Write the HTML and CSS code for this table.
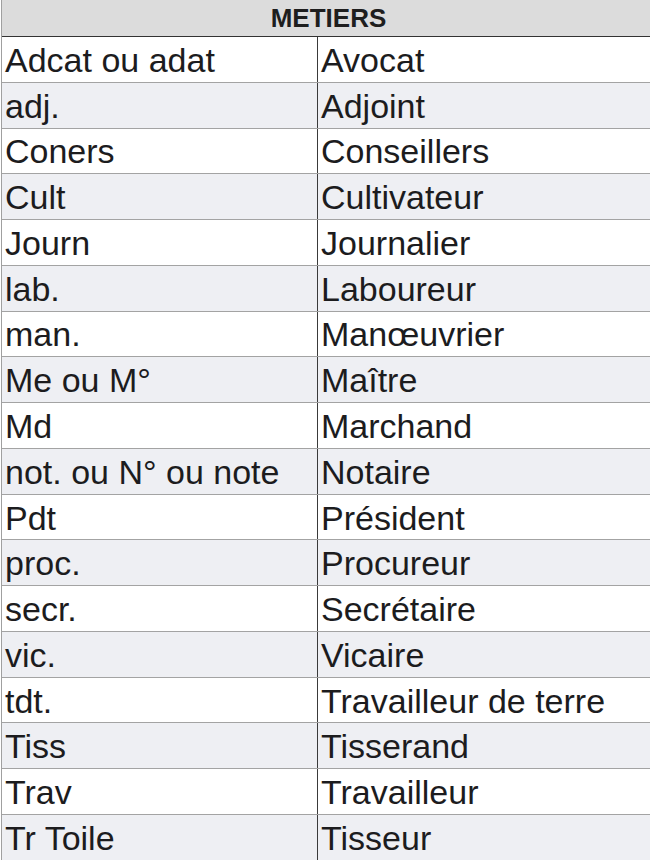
FILE: index.html
```html
<!DOCTYPE html>
<html lang="fr">
<head>
<meta charset="utf-8">
<title>METIERS</title>
<link rel="stylesheet" href="styles.css">
</head>
<body>
<div class="sheet">
  <div class="head">METIERS</div>
  <div class="row"><div class="c1">Adcat ou adat</div><div class="c2">Avocat</div></div>
  <div class="row alt"><div class="c1">adj.</div><div class="c2">Adjoint</div></div>
  <div class="row"><div class="c1">Coners</div><div class="c2">Conseillers</div></div>
  <div class="row alt"><div class="c1">Cult</div><div class="c2">Cultivateur</div></div>
  <div class="row"><div class="c1">Journ</div><div class="c2">Journalier</div></div>
  <div class="row alt"><div class="c1">lab.</div><div class="c2">Laboureur</div></div>
  <div class="row"><div class="c1">man.</div><div class="c2">Manœuvrier</div></div>
  <div class="row alt"><div class="c1">Me ou M°</div><div class="c2">Maître</div></div>
  <div class="row"><div class="c1">Md</div><div class="c2">Marchand</div></div>
  <div class="row alt"><div class="c1">not. ou N° ou note</div><div class="c2">Notaire</div></div>
  <div class="row"><div class="c1">Pdt</div><div class="c2">Président</div></div>
  <div class="row alt"><div class="c1">proc.</div><div class="c2">Procureur</div></div>
  <div class="row"><div class="c1">secr.</div><div class="c2">Secrétaire</div></div>
  <div class="row alt"><div class="c1">vic.</div><div class="c2">Vicaire</div></div>
  <div class="row"><div class="c1">tdt.</div><div class="c2">Travailleur de terre</div></div>
  <div class="row alt"><div class="c1">Tiss</div><div class="c2">Tisserand</div></div>
  <div class="row"><div class="c1">Trav</div><div class="c2">Travailleur</div></div>
  <div class="row alt"><div class="c1">Tr Toile</div><div class="c2">Tisseur</div></div>
</div>
</body>
</html>
```
FILE: styles.css
```css
html, body {
  margin: 0;
  padding: 0;
  background: #ffffff;
}
body {
  font-family: "Liberation Sans", Arial, Helvetica, sans-serif;
  color: #1c1c1e;
  overflow: hidden;
}
.sheet {
  margin-left: 1px;
  border-left: 1px solid #a0a0a0;
  width: 649px;
  height: 860px;
  display: flex;
  flex-direction: column;
}
.head {
  height: 36px;
  flex: 0 0 auto;
  box-sizing: content-box;
  background: #dcdcdc;
  border-bottom: 1px solid #333333;
  display: flex;
  align-items: center;
  justify-content: center;
  font-weight: bold;
  font-size: 26px;
  color: #1e1e1e;
  padding-left: 4px;
}
.row {
  flex: 0 0 auto;
  height: 45.78px;
  box-sizing: border-box;
  border-bottom: 1px solid #a3a3a3;
  display: grid;
  grid-template-columns: 316px 1fr;
  font-size: 34px;
  background: #ffffff;
}
.row.alt {
  background: #eeeff3;
}
.c1, .c2 {
  display: flex;
  align-items: center;
  white-space: nowrap;
  overflow: hidden;
  padding-top: 2px;
}
.c1 {
  padding-left: 3px;
  border-right: 1px solid #3a3a3a;
}
.c2 {
  padding-left: 3px;
}
```
